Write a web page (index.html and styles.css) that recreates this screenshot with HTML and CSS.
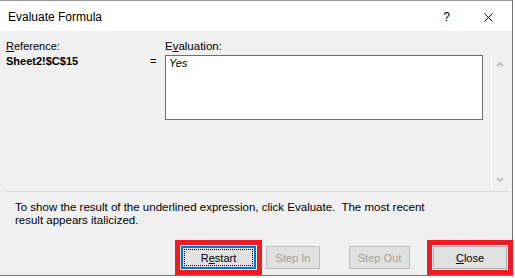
FILE: index.html
```html
<!DOCTYPE html>
<html lang="en">
<head>
    <meta charset="UTF-8">
    <meta name="viewport" content="width=device-width, initial-scale=1.0">
    <title>Evaluate Formula</title>
    <link rel="stylesheet" href="styles.css">
</head>
<body>
    <div class="window">
        <!-- Title Bar -->
        <div class="titlebar">
            <span class="title">Evaluate Formula</span>
            <span class="help">?</span>
            <svg class="close-x" width="9" height="9" viewBox="0 0 9 9">
                <path d="M0.5 0.5 L8.5 8.5 M8.5 0.5 L0.5 8.5" stroke="#000" stroke-width="1" fill="none"/>
            </svg>
        </div>

        <div class="dialog">
            <!-- Reference / Evaluation -->
            <div class="main">
                <div class="ref-col">
                    <div class="label"><u>R</u>eference:</div>
                    <div class="ref-value">Sheet2!$C$15</div>
                </div>
                <div class="eq-col">=</div>
                <div class="eval-col">
                    <div class="label">E<u>v</u>aluation:</div>
                    <div class="eval-box"><i>Yes</i></div>
                </div>
                <div class="scroll">
                    <svg width="8" height="6" viewBox="0 0 8 6">
                        <path d="M1 5 L4 2 L7 5" stroke="#c4c4c4" stroke-width="2" fill="none"/>
                    </svg>
                    <svg width="8" height="6" viewBox="0 0 8 6">
                        <path d="M1 1 L4 4 L7 1" stroke="#c4c4c4" stroke-width="2" fill="none"/>
                    </svg>
                </div>
            </div>

            <div class="separator"></div>

            <p class="hint">To show the result of the underlined expression, click Evaluate.&nbsp; The most recent<br>result appears italicized.</p>

            <!-- Buttons -->
            <div class="buttons">
                <button class="btn btn-restart marked">R<u>e</u>start</button>
                <button class="btn btn-step-in" disabled>Step In</button>
                <button class="btn btn-step-out" disabled>Step Out</button>
                <button class="btn btn-close marked"><u>C</u>lose</button>
            </div>
        </div>
    </div>
</body>
</html>
```

FILE: styles.css
```css
body {
    margin: 0;
    background-color: #fff;
    font-family: "Liberation Sans", Arial, sans-serif;
    font-size: 11px;
    color: #000;
}
.window {
    width: 513px;
    height: 276px;
    box-sizing: border-box;
    border-top: 1px solid #999;
    border-right: 1px solid #707070;
    border-bottom: 1px solid #777;
    display: flex;
    flex-direction: column;
}
.titlebar {
    height: 30px;
    flex: none;
    background-color: #fff;
    display: flex;
    align-items: flex-start;
    padding: 9px 0 0 8px;
    box-sizing: border-box;
}
.title {
    font-size: 12px;
    line-height: 14px;
}
.help {
    margin-left: auto;
    font-size: 12px;
    line-height: 14px;
}
.close-x {
    margin: 3px 19px 0 34px;
}
.dialog {
    flex: 1;
    background-color: #f0f0f0;
    display: flex;
    flex-direction: column;
}
.main {
    height: 160px;
    box-sizing: border-box;
    padding: 8px 0 0 6px;
    display: flex;
}
.label {
    line-height: 15px;
}
.eval-col .label {
    font-size: 11.5px;
}
.ref-col {
    width: 144px;
}
.ref-value {
    font-weight: bold;
    line-height: 15px;
}
.eq-col {
    width: 15px;
    padding-top: 15px;
    line-height: 15px;
}
.eval-col {
    width: 318px;
}
.eval-box {
    margin-top: 1px;
    height: 65px;
    box-sizing: border-box;
    border: 1px solid #6d6d6d;
    background-color: #fff;
    padding: 0 3px;
    line-height: 15px;
}
.scroll {
    margin: 16px 0 0 8px;
    width: 17px;
    height: 133px;
    box-sizing: border-box;
    border-left: 1px solid #fff;
    padding: 6px 0 5px 0;
    display: flex;
    flex-direction: column;
    justify-content: space-between;
    align-items: center;
}
.scroll svg {
    display: block;
}
.separator {
    height: 1px;
    background-color: #dadada;
    margin: 0 4px 0 6px;
}
.hint {
    margin: 9px 0 0 15px;
    font-size: 11.5px;
    line-height: 13px;
}
.buttons {
    margin-top: auto;
    padding: 0 5px 6px 0;
    display: flex;
    justify-content: flex-end;
}
.btn {
    height: 23px;
    padding: 0;
    font-family: inherit;
    font-size: 11px;
    color: #000;
    background-color: #e1e1e1;
    border: 1px solid #adadad;
    border-radius: 0;
    position: relative;
}
.btn:disabled {
    color: #a0a0a0;
    border-color: #bfbfbf;
}
.btn-restart {
    width: 75px;
    border: 2px solid #0078d7;
}
.btn-restart::after {
    content: "";
    position: absolute;
    top: 1px;
    left: 1px;
    right: 1px;
    bottom: 1px;
    border: 1px dotted #000;
}
.btn-step-in {
    width: 54px;
    margin-left: 10px;
}
.btn-step-out {
    width: 61px;
    margin-left: 29px;
}
.btn-close {
    width: 74px;
    margin-left: 23px;
}
/* red annotation boxes */
.marked {
    outline: 5px solid #ed1c24;
    outline-offset: 1px;
}
```
